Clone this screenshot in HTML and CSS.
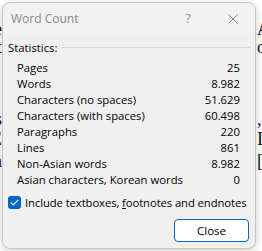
FILE: index.html
```html
<!DOCTYPE html>
<html lang="en">
<head>
  <meta charset="UTF-8" />
  <title>Word Count</title>
  <link rel="stylesheet" href="styles.css">
</head>
<body>
  <div class="page-edge edge-left">
    <span class="g1">e</span>
    <span class="g2">t</span>
    <span class="g3">s</span>
    <span class="g4">E</span>
    <span class="g5">a</span>
  </div>
  <div class="page-edge edge-right">
    <span class="g1">A</span>
    <span class="g2">o]</span>
    <span class="g3">,</span>
    <span class="g4">I</span>
    <span class="g5">[f</span>
  </div>

  <div class="dialog">
    <div class="titlebar">
      <span class="title">Word Count</span>
      <span class="title-btn help">?</span>
      <span class="title-btn close-x">
        <svg width="10" height="10" viewBox="0 0 10 10"><path d="M0.5 0.5 L9.5 9.5 M9.5 0.5 L0.5 9.5" stroke="#8a8a8a" stroke-width="1" fill="none"/></svg>
      </span>
    </div>

    <div class="group-head">
      <span>Statistics:</span>
      <span class="rule"></span>
    </div>

    <ul class="stats">
      <li><span>Pages</span><span>25</span></li>
      <li><span>Words</span><span>8.982</span></li>
      <li><span>Characters (no spaces)</span><span>51.629</span></li>
      <li><span>Characters (with spaces)</span><span>60.498</span></li>
      <li><span>Paragraphs</span><span>220</span></li>
      <li><span>Lines</span><span>861</span></li>
      <li><span>Non-Asian words</span><span>8.982</span></li>
      <li><span>Asian characters, Korean words</span><span>0</span></li>
    </ul>

    <label class="check-row">
      <span class="checkbox">
        <svg width="9" height="7" viewBox="0 0 9 7"><path d="M0.8 3.6 L3.2 5.9 L8.2 0.9" stroke="#fff" stroke-width="1.2" fill="none"/></svg>
      </span>
      <span class="check-label">Include textboxes, <u>f</u>ootnotes and endnotes</span>
    </label>

    <div class="actions">
      <button class="btn">Close</button>
    </div>
  </div>
</body>
</html>
```

FILE: styles.css
```css
* {
  box-sizing: border-box;
}
body {
  margin: 0;
  width: 262px;
  height: 251px;
  background: #fff;
  overflow: hidden;
  position: relative;
  font-family: 'Open Sans', 'Noto Sans', sans-serif;
}

/* bits of the document peeking out behind the dialog */
.page-edge {
  position: absolute;
  top: 0;
  height: 251px;
  display: flex;
  flex-direction: column;
  font-family: 'Liberation Serif', serif;
  font-size: 18px;
  line-height: 14px;
  color: #111;
}
.edge-left {
  left: -8px;
  width: 10px;
  align-items: flex-end;
  overflow: hidden;
}
.edge-right {
  left: 257px;
  width: 20px;
  align-items: flex-start;
}
.page-edge .g1 { margin-top: 22px; }
.page-edge .g2 { margin-top: 4px; }
.page-edge .g3 { margin-top: 58px; }
.page-edge .g4 { margin-top: 6px; }
.page-edge .g5 { margin-top: 8px; }

.dialog {
  position: absolute;
  left: 2px;
  top: 2px;
  width: 254px;
  height: 247px;
  background: #f0f0f0;
  border: 1px solid #c4c4c4;
  border-radius: 8px;
  box-shadow: 0 2px 8px rgba(0,0,0,0.18);
  font-size: 11.3px;
  color: #000;
  display: flex;
  flex-direction: column;
}
.titlebar {
  height: 31px;
  display: flex;
  align-items: center;
  padding-left: 8px;
  background: #f2f2f2;
  border-radius: 8px 8px 0 0;
  color: #8a8a8a;
  font-size: 12px;
}
.title {
  flex: 1;
}
.title-btn {
  width: 46px;
  display: flex;
  justify-content: center;
  align-items: center;
}
.close-x {
  width: 44px;
}
.group-head {
  display: flex;
  align-items: center;
  gap: 4px;
  padding: 5px 5px 0 5px;
  height: 21px;
}
.rule {
  flex: 1;
  height: 1px;
  background: #d8d8d8;
}
.stats {
  list-style: none;
  margin: 5px 0 0 0;
  padding: 0 15px 0 14px;
}
.stats li {
  display: flex;
  justify-content: space-between;
  height: 16px;
  line-height: 16px;
  white-space: nowrap;
}
.check-row {
  display: flex;
  align-items: center;
  gap: 4px;
  margin: 6px 0 0 5px;
  height: 16px;
}
.checkbox {
  flex: none;
  width: 13px;
  height: 13px;
  background: #0067c0;
  border-radius: 3px;
  display: flex;
  justify-content: center;
  align-items: center;
}
.check-label {
  white-space: nowrap;
  letter-spacing: -0.1px;
}
.actions {
  display: flex;
  justify-content: flex-end;
  padding: 0 6px 0 0;
  margin-top: 9px;
}
.btn {
  width: 75px;
  height: 23px;
  background: #fff;
  border: 1px solid #0067c0;
  border-radius: 4px;
  font-family: inherit;
  font-size: 11.5px;
  color: #000;
  padding: 0;
}
```
